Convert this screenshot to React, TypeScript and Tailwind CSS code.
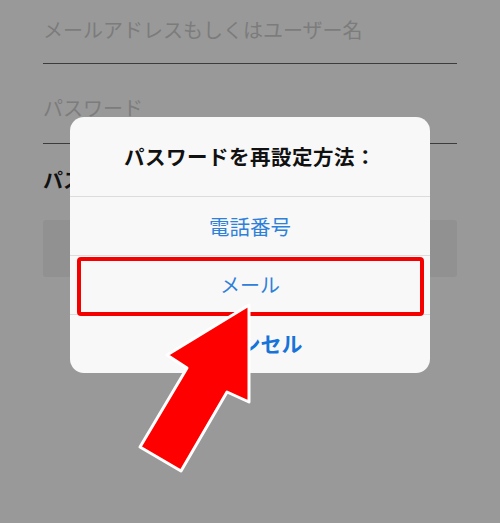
import React from 'react';

const font = { fontFamily: '"Noto Sans CJK JP", "Noto Sans", sans-serif' };

export default function App() {
  return (
    <div className="relative w-[500px] h-[523px] overflow-hidden bg-[#999999]" style={font}>
      {/* login form behind the sheet */}
      <div className="px-[43px]">
        <div className="h-[64px] border-b border-[#3c3c3c] pt-[16px]">
          <div className="text-[20px] leading-[28px] text-[#7c7c7c]">メールアドレスもしくはユーザー名</div>
        </div>
        <div className="h-[80px] border-b border-[#3c3c3c] pt-[30px]">
          <div className="text-[20px] leading-[28px] text-[#7c7c7c]">パスワード</div>
        </div>
        <div className="mt-[22px] text-[20px] leading-[28px] font-bold text-[#111]">パスワードをお忘れですか？</div>
        <div className="mt-[26px] h-[57px] rounded-[3px] bg-[#919191]" />
      </div>

      {/* action sheet */}
      <div className="absolute left-[70px] top-[117px] w-[360px] rounded-[14px] bg-[#f8f8f8] overflow-hidden">
        <div className="h-[80px] flex items-center justify-center border-b border-[#dcdcdc]">
          <span className="text-[20.5px] font-bold text-[#111] tracking-[0.5px]">パスワードを再設定方法：</span>
        </div>
        <div className="h-[59px] flex items-center justify-center border-b border-[#dcdcdc]">
          <span className="text-[20.5px] text-[#2f80d8]">電話番号</span>
        </div>
        <div className="h-[59px] flex items-center justify-center border-b border-[#dcdcdc]">
          <span className="text-[20px] text-[#2f80d8]">メール</span>
        </div>
        <div className="h-[58px] flex items-center justify-center">
          <span className="text-[21px] font-bold text-[#1573d9]">キャンセル</span>
        </div>
        <div className="absolute left-[7px] top-[140px] w-[347px] h-[59px] border-[4px] border-[#f50000] rounded-[4px]" />
      </div>

      {/* pointer arrow */}
      <svg className="absolute left-0 top-0" width="500" height="523" viewBox="0 0 500 523">
        <polygon
          points="249,305 249,402 227,392 181,471 140,447 187,368 167,355"
          fill="#ff0000"
          stroke="#ffffff"
          strokeWidth="3"
          strokeLinejoin="round"
        />
      </svg>
    </div>
  );
}
